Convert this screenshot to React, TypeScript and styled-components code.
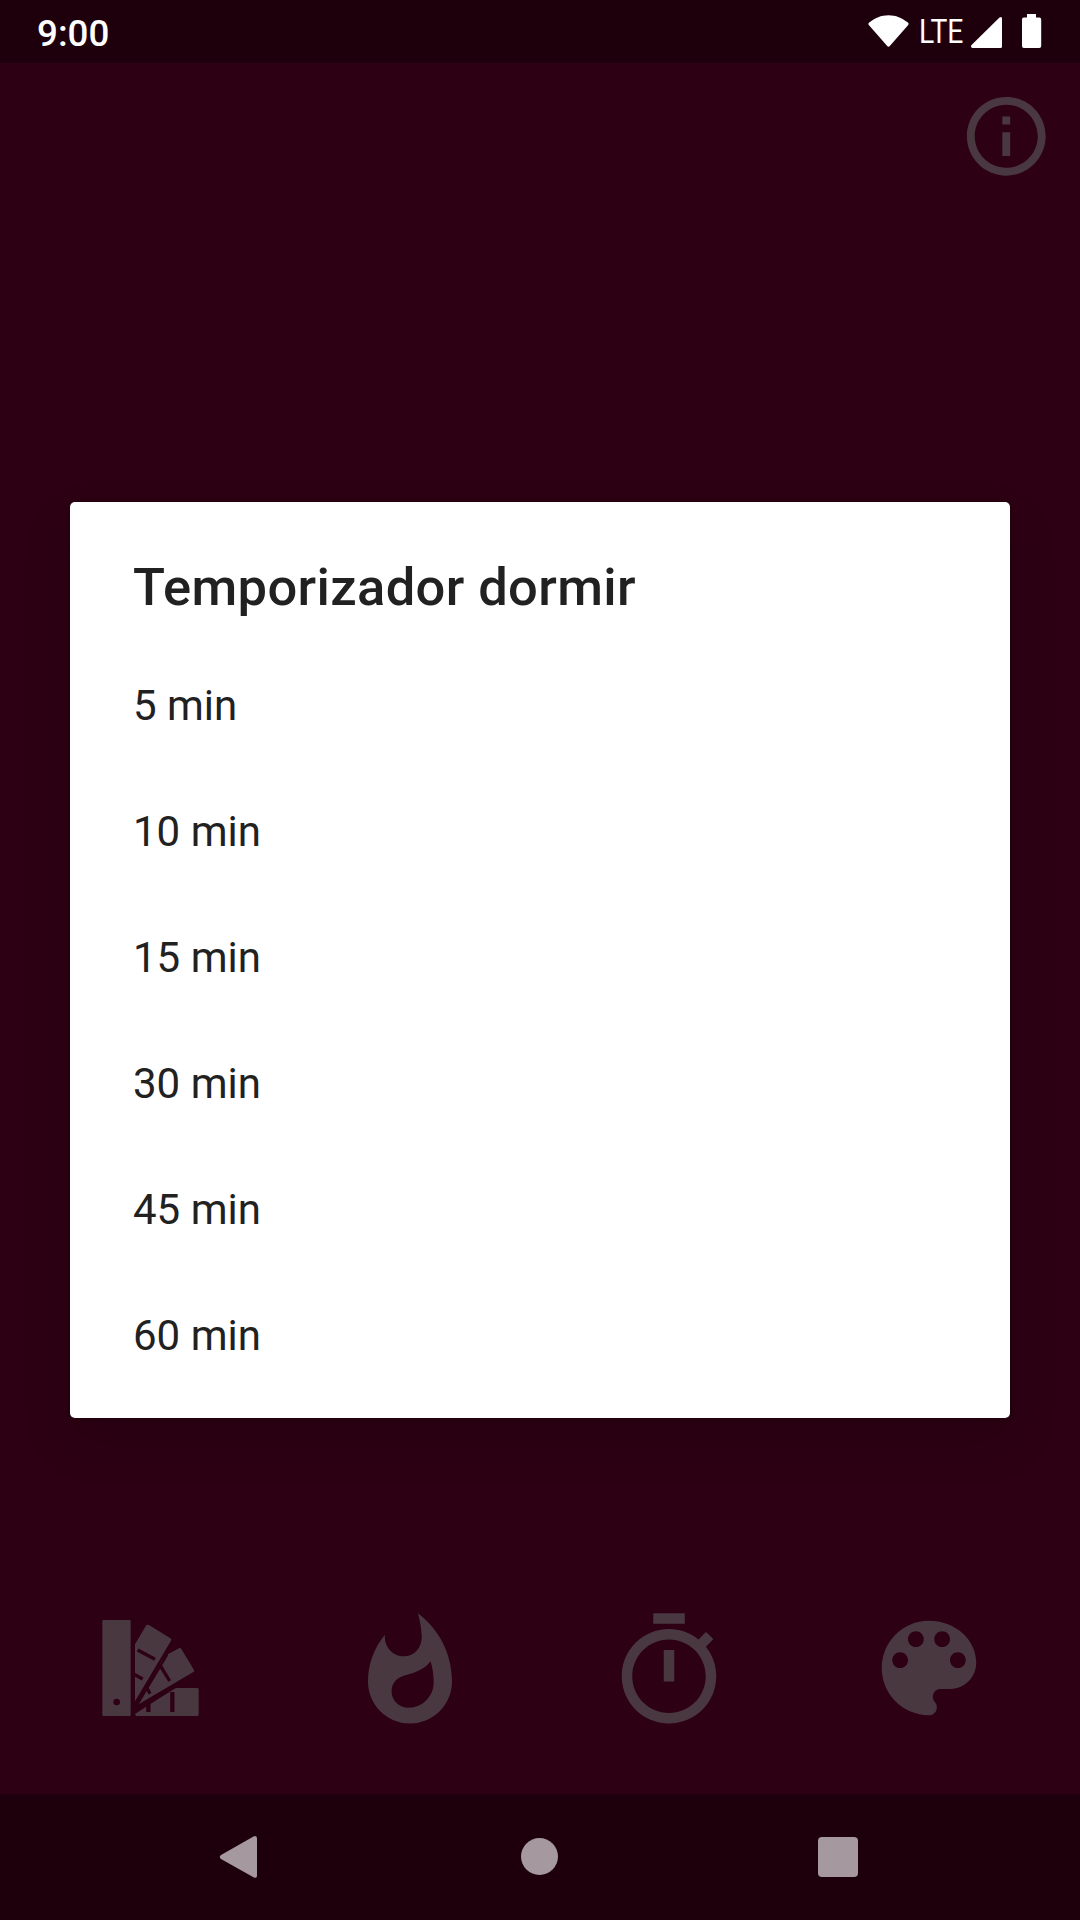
import React from "react";
import styled, { createGlobalStyle } from "styled-components";

const GlobalStyle = createGlobalStyle`
  * { box-sizing: border-box; }
  body { margin: 0; background: #2d0013; }
`;

const Screen = styled.div`
  position: relative;
  display: flex;
  flex-direction: column;
  width: 1080px;
  height: 1920px;
  overflow: hidden;
  background: #2d0013;
  font-family: Roboto, "Noto Sans", sans-serif;
`;

const StatusBar = styled.header`
  display: flex;
  justify-content: space-between;
  align-items: flex-start;
  height: 63px;
  padding: 0 38px 0 37px;
  background: #1e000d;
  color: #fff;
`;

const Clock = styled.span`
  padding-top: 12px;
  font-size: 36.75px;
  line-height: 43px;
  font-weight: 500;
`;

const StatusIcons = styled.div`
  display: flex;
  align-items: flex-start;
  padding-top: 12px;
  svg { display: block; flex: none; fill: #fff; }
`;

const Network = styled.span`
  flex: none;
  width: 62px;
  padding: 1px 0 0 10px;
  font-size: 32.5px;
  line-height: 39px;
  transform: scaleX(0.87);
  transform-origin: 10px 50%;
`;

const Battery = styled.div`
  margin-left: 19px;
`;

const Content = styled.main`
  flex: 1;
  display: flex;
  flex-direction: column;
  justify-content: space-between;
`;

const TopActions = styled.div`
  display: flex;
  justify-content: flex-end;
  padding: 26px 26.5px 0 0;
`;

const BottomActions = styled.nav`
  display: grid;
  grid-template-columns: repeat(4, 259.5px);
  justify-content: center;
  justify-items: center;
  height: 189px;
`;

const IconButton = styled.button<{ $size: number; $drop?: number; $inset?: number }>`
  width: ${(p) => p.$size}px;
  height: ${(p) => p.$size}px;
  margin: ${(p) => p.$drop ?? 0}px ${(p) => p.$inset ?? 0}px 0 0;
  padding: 0;
  border: 0;
  background: none;
  color: #4a3840;
  svg { display: block; width: 100%; height: 100%; fill: currentColor; }
`;

const NavigationBar = styled.footer`
  display: flex;
  justify-content: space-between;
  align-items: center;
  height: 126px;
  padding: 0 222px 0 219px;
  background: #1d000b;
  svg { display: block; fill: #a5989f; }
`;

const Scrim = styled.div`
  position: absolute;
  inset: 0;
  display: flex;
  align-items: center;
  justify-content: center;
`;

const Dialog = styled.section`
  width: 940px;
  height: 916px;
  border-radius: 5px;
  background: #fff;
  color: #212121;
  box-shadow: 0 22px 50px rgba(0, 0, 0, 0.14), 0 0 5px rgba(0, 0, 0, 0.3);
`;

const Title = styled.h2`
  height: 140px;
  margin: 0;
  padding: 54px 63px 0;
  font-size: 52.5px;
  line-height: 62px;
  font-weight: 500;
  letter-spacing: 0.37px;
`;

const Options = styled.ul`
  margin: 0;
  padding: 0;
  list-style: none;
`;

const Option = styled.li`
  display: flex;
  align-items: center;
  height: 126px;
  padding: 0 63px;
  font-size: 42px;
`;

const InfoIcon = () => (
  <svg viewBox="0 0 24 24">
    <path d="M11 7h2v2h-2zm0 4h2v6h-2zm1-9C6.48 2 2 6.48 2 12s4.48 10 10 10 10-4.48 10-10S17.52 2 12 2zm0 18c-4.41 0-8-3.59-8-8s3.59-8 8-8 8 3.59 8 8-3.59 8-8 8z" />
  </svg>
);

const SwatchIcon = () => (
  <svg viewBox="24 45 378 378">
    <path
      fillRule="evenodd"
      d="M71 90H148q4 0 4 4V374q0 4-4 4H71q-4 0-4-4V94q0-4 4-4zM110 326a10 10 0 1 0 0 20a10 10 0 1 0 0-20z"
    />
    <path d="M165 163L197 109q4-7 11-3L271 145q5 3 2 7L165 334z" />
    <path d="M246 212L263 193L297 175q5-2 7 2L342 240q2 4-2 6L172 345z" />
    <path d="M165 372L285 294H352q4 0 4 4V374q0 4-4 4H168z" />
    <g stroke="#2d0013" fill="none">
      <path d="M173 180L225 208M162 253L188 267" strokeWidth="10" />
      <path d="M239 224L269 273M200 292L210 311" strokeWidth="10" />
      <path d="M277 306V366M205 340V366" strokeWidth="13" />
      <path d="M262 193L168 350" strokeWidth="7" />
      <path d="M285 290L163 363" strokeWidth="10" />
    </g>
  </svg>
);

const FlameIcon = () => (
  <svg viewBox="0 0 24 24">
    <path d="M13.5.98s.74 2.34.74 4.49c0 2.06-1.35 3.73-3.41 3.73-2.07 0-3.63-1.67-3.63-3.73l.03-.36C5.21 7.51 4 10.62 4 14c0 4.42 3.58 8 8 8s8-3.58 8-8C20 8.61 17.41 3.9 13.5.98zM11.71 19c-1.78 0-3.22-1.4-3.22-3.14 0-1.62 1.05-2.76 2.81-3.12 1.77-.36 3.6-1.21 4.62-2.58.39 1.29.59 2.65.59 4.04 0 2.65-2.15 4.8-4.8 4.8z" />
  </svg>
);

const TimerIcon = () => (
  <svg viewBox="0 0 24 24">
    <path d="M15 1H9v2h6V1zm-4 13h2V8h-2v6zm8.03-6.61l1.42-1.42c-.43-.51-.9-.99-1.41-1.41l-1.42 1.42C16.07 4.74 14.12 4 12 4c-4.97 0-9 4.03-9 9s4.02 9 9 9 9-4.03 9-9c0-2.12-.74-4.07-1.97-5.61zM12 20c-3.87 0-7-3.13-7-7s3.13-7 7-7 7 3.13 7 7-3.13 7-7 7z" />
  </svg>
);

const PaletteIcon = () => (
  <svg viewBox="0 0 24 24">
    <path d="M12 3c-4.97 0-9 4.03-9 9s4.03 9 9 9c.83 0 1.5-.67 1.5-1.5 0-.39-.15-.74-.39-1.01-.23-.26-.38-.61-.38-.99 0-.83.67-1.5 1.5-1.5H16c2.76 0 5-2.24 5-5 0-4.42-4.03-8-9-8zm-5.5 9c-.83 0-1.5-.67-1.5-1.5S5.67 9 6.5 9 8 9.67 8 10.5 7.33 12 6.5 12zm3-4C8.67 8 8 7.33 8 6.5S8.67 5 9.5 5s1.5.67 1.5 1.5S10.33 8 9.5 8zm5 0c-.83 0-1.5-.67-1.5-1.5S13.67 5 14.5 5s1.5.67 1.5 1.5S15.33 8 14.5 8zm3 4c-.83 0-1.5-.67-1.5-1.5S16.67 9 17.5 9s1.5.67 1.5 1.5-.67 1.5-1.5 1.5z" />
  </svg>
);

const actions = [
  { label: "Colores", Icon: SwatchIcon, drop: 0, inset: 0 },
  { label: "Fuego", Icon: FlameIcon, drop: 2.6, inset: 1.5 },
  { label: "Temporizador", Icon: TimerIcon, drop: 2.6, inset: 1.5 },
  { label: "Paleta", Icon: PaletteIcon, drop: 0, inset: 0 },
];

const minutes = [5, 10, 15, 30, 45, 60];

export default function App() {
  return (
    <>
      <GlobalStyle />
      <Screen>
        <StatusBar>
          <Clock>9:00</Clock>
          <StatusIcons>
            <svg width="42" height="38" viewBox="867 12 42 38">
              <path d="M869.2 22.5C875 18 881 15.2 888.5 15.2S902 18 907.9 22.5Q909.2 23.6 908.2 25L890 45.8Q888.5 47.6 887 45.8L868.8 25Q867.8 23.6 869.2 22.5z" />
            </svg>
            <Network>LTE</Network>
            <svg width="32" height="38" viewBox="971 12 32 38">
              <path d="M971.3 45.2L999.5 17.5Q1002 16 1002 18.5V46.5Q1002 48 1000.5 48H972.5Q970.5 48 971.3 45.2z" />
            </svg>
            <Battery>
              <svg width="20" height="38" viewBox="1022 12 20 38">
                <path d="M1027 14H1036V17.5H1039.3Q1041.2 17.5 1041.2 19.4V46Q1041.2 48 1039.3 48H1023.9Q1022 48 1022 46V19.4Q1022 17.5 1023.9 17.5H1027z" />
              </svg>
            </Battery>
          </StatusIcons>
        </StatusBar>
        <Content>
          <TopActions>
            <IconButton $size={94.5} aria-label="Info">
              <InfoIcon />
            </IconButton>
          </TopActions>
          <BottomActions>
            {actions.map(({ label, Icon, drop, inset }) => (
              <IconButton key={label} $size={126} $drop={drop} $inset={inset} aria-label={label}>
                <Icon />
              </IconButton>
            ))}
          </BottomActions>
        </Content>
        <NavigationBar>
          <svg width="39" height="44" viewBox="0 0 39 44">
            <path d="M2 20L34.5 1.4Q38 0 38 3.5V40.5Q38 44 34.5 42.2L2 24Q-.5 22 2 20z" />
          </svg>
          <svg width="44" height="38" viewBox="0 0 44 38">
            <circle cx="23.5" cy="18.5" r="18.5" />
          </svg>
          <svg width="40" height="40" viewBox="0 0 40 40">
            <rect width="40" height="40" rx="4" />
          </svg>
        </NavigationBar>
        <Scrim>
          <Dialog role="dialog">
            <Title>Temporizador dormir</Title>
            <Options>
              {minutes.map((m) => (
                <Option key={m}>{m} min</Option>
              ))}
            </Options>
          </Dialog>
        </Scrim>
      </Screen>
    </>
  );
}
